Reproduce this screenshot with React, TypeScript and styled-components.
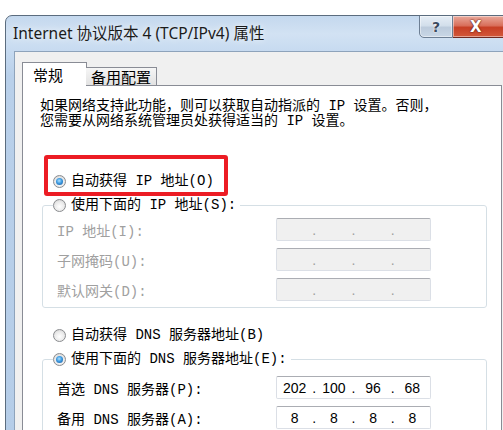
import styled, { createGlobalStyle } from "styled-components";

const GlobalStyle = createGlobalStyle`
  html, body {
    margin: 0;
    padding: 0;
    background: #ffffff;
    overflow: hidden;
  }
`;

const Page = styled.div`
  width: 503px;
  height: 430px;
  overflow: hidden;
  box-sizing: border-box;
  padding: 15px 0 0 5px;
`;

const Window = styled.div`
  width: 520px;
  height: 440px;
  box-sizing: border-box;
  border: 1px solid #5b6c7e;
  border-radius: 7px 7px 0 0;
  background: linear-gradient(
    to bottom,
    #c4d8ee 0px,
    #d2e2f3 18px,
    #c6daf0 36px,
    #b9d0ea 60px,
    #b5cde8 100%
  );
  display: flex;
  flex-direction: column;
  overflow: hidden;
`;

const TitleBar = styled.div`
  height: 35px;
  display: flex;
  align-items: flex-start;
  flex-shrink: 0;
`;

const Title = styled.div`
  margin: 7px 0 0 7px;
  font-family: "Noto Sans", "Noto Sans CJK SC", sans-serif;
  font-size: 15.5px;
  line-height: 20px;
  color: #1b1b1b;
  text-shadow: 0 0 6px rgba(255, 255, 255, 0.9);
  white-space: nowrap;
`;

const Buttons = styled.div`
  margin-left: auto;
  margin-right: 16px;
  display: flex;
  margin-top: -1px;
`;

const CaptionButton = styled.div<{ $close?: boolean }>`
  height: 23px;
  width: ${(p) => (p.$close ? "55px" : "34px")};
  box-sizing: border-box;
  border: 1px solid ${(p) => (p.$close ? "#6e2a22" : "#6d7f94")};
  border-left: ${(p) => (p.$close ? "none" : "1px solid #6d7f94")};
  border-radius: ${(p) => (p.$close ? "0" : "0 0 0 5px")};
  background: ${(p) =>
    p.$close
      ? "linear-gradient(to bottom, #e9a99b 0%, #d9705c 45%, #c73f25 55%, #d2583a 100%)"
      : "linear-gradient(to bottom, #e6eef6 0%, #d3dfeb 45%, #bccbdc 55%, #c9d7e6 100%)"};
  box-shadow: inset 0 0 0 1px rgba(255, 255, 255, 0.45);
  display: flex;
  align-items: center;
  justify-content: ${(p) => (p.$close ? "flex-start" : "center")};
  padding-left: ${(p) => (p.$close ? "17px" : "0")};
  font-family: "DejaVu Sans", sans-serif;
  font-weight: bold;
  font-size: ${(p) => (p.$close ? "15px" : "14px")};
  color: ${(p) => (p.$close ? "#ffffff" : "#3a4a5e")};
  text-shadow: ${(p) =>
    p.$close ? "0 0 2px #5a1a10, 0 0 1px #5a1a10" : "0 0 2px #ffffff, 0 0 1px #ffffff"};
`;

const Body = styled.div`
  flex: 1;
  margin-left: 8px;
  border-top: 1px solid #8ea3bb;
  border-left: 1px solid #8ea3bb;
  background: #f0f0f0;
  padding: 10px 0 0 7px;
  font-family: "Liberation Mono", "Noto Sans CJK SC", monospace;
  font-size: 14px;
  color: #000000;
`;

const Tabs = styled.div`
  display: flex;
  align-items: flex-end;
  height: 24px;
  margin-bottom: -1px;
  position: relative;
  z-index: 1;
`;

const Tab = styled.div<{ $active?: boolean }>`
  box-sizing: border-box;
  height: ${(p) => (p.$active ? "24px" : "19px")};
  padding: ${(p) => (p.$active ? "0 10px" : "0 5px")};
  width: ${(p) => (p.$active ? "65px" : "71px")};
  margin-left: ${(p) => (p.$active ? "0" : "-1px")};
  border: 1px solid #898c95;
  border-bottom: ${(p) => (p.$active ? "none" : "1px solid #898c95")};
  border-left: ${(p) => (p.$active ? "1px solid #898c95" : "none")};
  background: ${(p) =>
    p.$active ? "#ffffff" : "linear-gradient(to bottom, #f6f6f6, #e2e2e2)"};
  font-family: "Noto Sans CJK SC", sans-serif;
  font-size: 15px;
  line-height: ${(p) => (p.$active ? "24px" : "18px")};
  white-space: nowrap;
`;

const Panel = styled.div`
  width: 480px;
  height: 400px;
  box-sizing: border-box;
  border: 1px solid #898c95;
  background: #ffffff;
  padding: 0 0 0 17px;
`;

const Desc = styled.p`
  margin: 13px 0 0;
  line-height: 15px;
  white-space: nowrap;
`;

const Options = styled.div`
  margin: 44px 0 0 2px;
  width: 445px;
`;

const RadioRow = styled.label<{ $gap?: number }>`
  display: flex;
  align-items: center;
  gap: 5px;
  height: 16px;
  line-height: 16px;
  padding-left: 11px;
  margin-top: ${(p) => p.$gap ?? 0}px;
  white-space: nowrap;
  position: relative;
`;

const Highlight = styled.span`
  position: absolute;
  top: -18px;
  left: 2px;
  width: 184px;
  height: 41px;
  box-sizing: border-box;
  border: 4px solid #ec1c24;
  border-radius: 3px;
  pointer-events: none;
`;

const Radio = styled.span<{ $checked?: boolean }>`
  width: 13px;
  height: 13px;
  box-sizing: border-box;
  border-radius: 50%;
  border: 1px solid #8a8c8f;
  background: radial-gradient(circle at 50% 60%, #ffffff 0%, #eaeaea 55%, #c9c9c9 100%);
  display: flex;
  align-items: center;
  justify-content: center;
  flex-shrink: 0;

  &::after {
    content: "";
    display: ${(p) => (p.$checked ? "block" : "none")};
    width: 7px;
    height: 7px;
    border-radius: 50%;
    background: radial-gradient(circle at 45% 40%, #aee0ff 0%, #3e9be0 45%, #15539b 100%);
  }
`;

const Group = styled.fieldset<{ $top: number }>`
  margin: 8px 0 0;
  padding: ${(p) => p.$top}px 0 6px 14px;
  border: 1px solid #d5dfe5;
  border-radius: 3px;
  min-width: 0;
`;

const Legend = styled.legend`
  margin-left: -4px;
  padding: 0 4px 0 0;
  display: flex;
  align-items: center;
  gap: 5px;
  height: 16px;
  line-height: 16px;
  white-space: nowrap;
`;

const FieldRow = styled.div<{ $disabled?: boolean }>`
  display: grid;
  grid-template-columns: 219px 155px;
  align-items: center;
  height: 23px;
  color: ${(p) => (p.$disabled ? "#a0a0a0" : "#000000")};
  white-space: nowrap;

  & + & {
    margin-top: 7px;
  }
`;

const IpBox = styled.div<{ $disabled?: boolean }>`
  height: 23px;
  box-sizing: border-box;
  border: 1px solid #dbdfe6;
  border-top-color: #abadb3;
  border-radius: 2px;
  background: ${(p) => (p.$disabled ? "#f0f0f0" : "#ffffff")};
  display: flex;
  align-items: center;
  font-family: "Liberation Sans", Arial, sans-serif;
  font-size: 14px;
  color: #000000;
`;

const Seg = styled.span`
  flex: 1;
  text-align: center;
`;

const Dot = styled.span<{ $disabled?: boolean }>`
  width: 4px;
  text-align: center;
  color: ${(p) => (p.$disabled ? "#a0a0a0" : "#000000")};
`;

function IpField({ parts, disabled }: { parts?: string[]; disabled?: boolean }) {
  const values = parts ?? ["", "", "", ""];
  const cells: JSX.Element[] = [];
  values.forEach((v, i) => {
    cells.push(<Seg key={"s" + i}>{v}</Seg>);
    if (i < 3)
      cells.push(
        <Dot key={"d" + i} $disabled={disabled}>
          .
        </Dot>
      );
  });
  return <IpBox $disabled={disabled}>{cells}</IpBox>;
}

export default function App() {
  return (
    <>
      <GlobalStyle />
      <Page>
        <Window>
          <TitleBar>
            <Title>Internet 协议版本 4 (TCP/IPv4) 属性</Title>
            <Buttons>
              <CaptionButton>?</CaptionButton>
              <CaptionButton $close>X</CaptionButton>
            </Buttons>
          </TitleBar>
          <Body>
            <Tabs>
              <Tab $active>常规</Tab>
              <Tab>备用配置</Tab>
            </Tabs>
            <Panel>
              <Desc>
                如果网络支持此功能，则可以获取自动指派的 IP 设置。否则，
                <br />
                您需要从网络系统管理员处获得适当的 IP 设置。
              </Desc>
              <Options>
                <RadioRow>
                  <Highlight />
                  <Radio $checked />
                  自动获得 IP 地址(O)
                </RadioRow>
                <Group $top={5}>
                  <Legend>
                    <Radio />
                    使用下面的 IP 地址(S):
                  </Legend>
                  <FieldRow $disabled>
                    <span>IP 地址(I):</span>
                    <IpField disabled />
                  </FieldRow>
                  <FieldRow $disabled>
                    <span>子网掩码(U):</span>
                    <IpField disabled />
                  </FieldRow>
                  <FieldRow $disabled>
                    <span>默认网关(D):</span>
                    <IpField disabled />
                  </FieldRow>
                </Group>
                <RadioRow $gap={19}>
                  <Radio />
                  自动获得 DNS 服务器地址(B)
                </RadioRow>
                <Group $top={9}>
                  <Legend>
                    <Radio $checked />
                    使用下面的 DNS 服务器地址(E):
                  </Legend>
                  <FieldRow>
                    <span>首选 DNS 服务器(P):</span>
                    <IpField parts={["202", "100", "96", "68"]} />
                  </FieldRow>
                  <FieldRow>
                    <span>备用 DNS 服务器(A):</span>
                    <IpField parts={["8", "8", "8", "8"]} />
                  </FieldRow>
                </Group>
              </Options>
            </Panel>
          </Body>
        </Window>
      </Page>
    </>
  );
}
